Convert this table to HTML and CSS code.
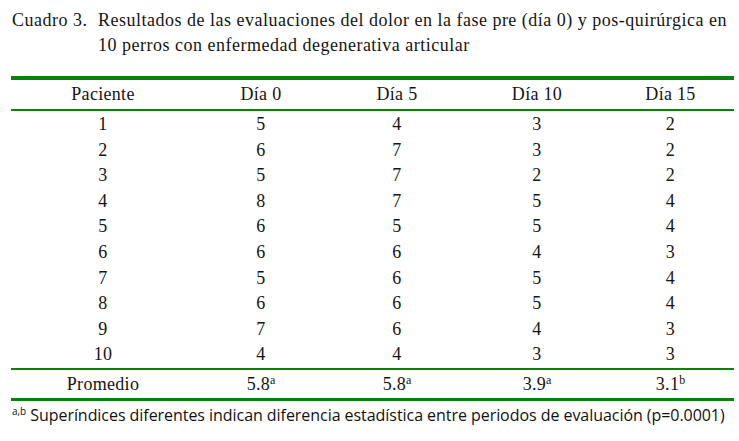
FILE: index.html
```html
<!DOCTYPE html>
<html lang="es">
<head>
<meta charset="utf-8">
<title>Cuadro 3</title>
<link rel="stylesheet" href="styles.css">
</head>
<body>
<div class="page">
  <div class="caption">
    <span class="cap-label">Cuadro 3.</span>
    <span class="cap-text">Resultados de las evaluaciones del dolor en la fase pre (día 0) y pos-quirúrgica en 10 perros con enfermedad degenerativa articular</span>
  </div>
  <div class="table">
    <div class="row head">
      <span>Paciente</span><span>Día 0</span><span>Día 5</span><span>Día 10</span><span>Día 15</span>
    </div>
    <div class="body">
      <div class="row"><span>1</span><span>5</span><span>4</span><span>3</span><span>2</span></div>
      <div class="row"><span>2</span><span>6</span><span>7</span><span>3</span><span>2</span></div>
      <div class="row"><span>3</span><span>5</span><span>7</span><span>2</span><span>2</span></div>
      <div class="row"><span>4</span><span>8</span><span>7</span><span>5</span><span>4</span></div>
      <div class="row"><span>5</span><span>6</span><span>5</span><span>5</span><span>4</span></div>
      <div class="row"><span>6</span><span>6</span><span>6</span><span>4</span><span>3</span></div>
      <div class="row"><span>7</span><span>5</span><span>6</span><span>5</span><span>4</span></div>
      <div class="row"><span>8</span><span>6</span><span>6</span><span>5</span><span>4</span></div>
      <div class="row"><span>9</span><span>7</span><span>6</span><span>4</span><span>3</span></div>
      <div class="row"><span>10</span><span>4</span><span>4</span><span>3</span><span>3</span></div>
    </div>
    <div class="row foot">
      <span>Promedio</span><span>5.8<sup>a</sup></span><span>5.8<sup>a</sup></span><span>3.9<sup>a</sup></span><span>3.1<sup>b</sup></span>
    </div>
  </div>
  <p class="note"><sup>a,b</sup> Superíndices diferentes indican diferencia estadística entre periodos de evaluación (p=0.0001)</p>
</div>
</body>
</html>
```
FILE: styles.css
```css
html, body {
  margin: 0;
  padding: 0;
  background: #ffffff;
}
.page {
  padding: 0 5px 0 11px;
  color: #151515;
  font-family: "Liberation Serif", "Times New Roman", serif;
}
.caption {
  display: flex;
  padding-top: 8px;
  padding-left: 1px;
  font-size: 18px;
  line-height: 25px;
  letter-spacing: 0.5px;
}
.cap-label {
  flex: 0 0 86px;
}
.cap-text {
  flex: 0 0 634px;
}
.table {
  margin-top: 18px;
  border-top: 4px solid #0b800b;
  border-bottom: 3px solid #0b800b;
  width: 723px;
}
.row {
  display: grid;
  grid-template-columns: 184px 132px 140px 140px 127px;
  text-align: center;
  font-size: 18px;
  letter-spacing: 0.3px;
}
.head {
  height: 29px;
  line-height: 29px;
  border-bottom: 2px solid #0b800b;
}
.body {
  padding-top: 1px;
  border-bottom: 2px solid #0b800b;
}
.body .row {
  height: 25.6px;
  line-height: 25.6px;
}
.foot {
  height: 28px;
  line-height: 28px;
}
.foot sup {
  font-size: 12px;
  line-height: 0;
  letter-spacing: 0;
  vertical-align: 6px;
}
.note {
  margin: 0;
  padding-top: 2px;
  padding-left: 1px;
  font-family: "Open Sans", "Noto Sans", sans-serif;
  font-size: 16px;
  line-height: 24px;
  letter-spacing: -0.05px;
  color: #111;
}
.note sup {
  font-size: 10px;
  line-height: 0;
  vertical-align: 6px;
}
```
